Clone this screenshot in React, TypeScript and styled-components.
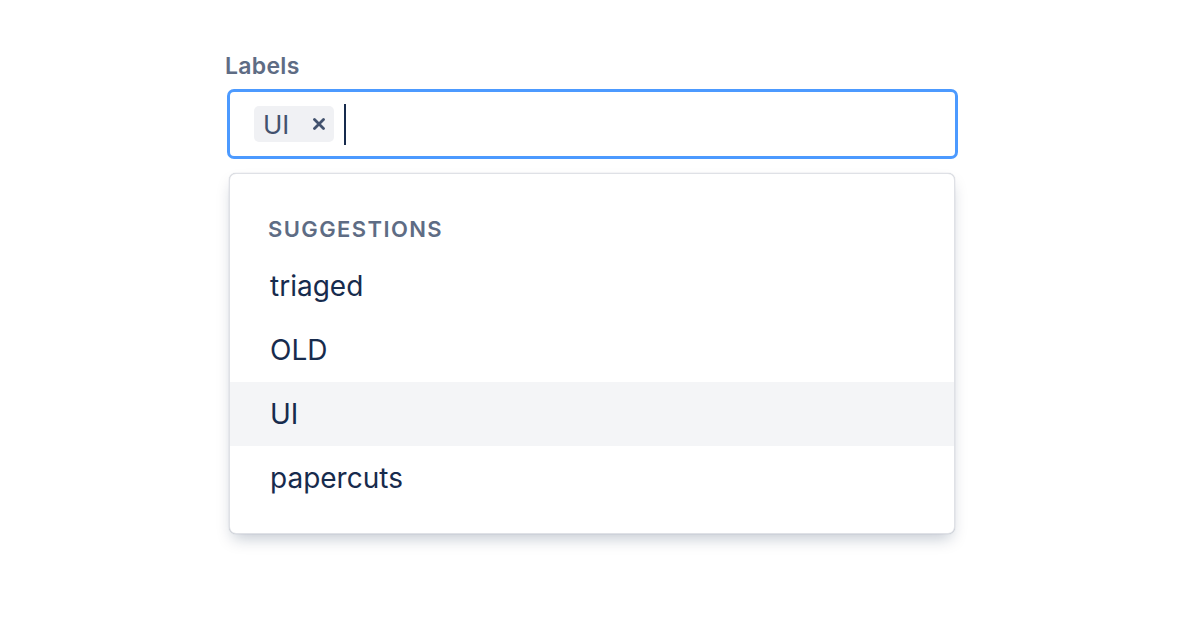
import React from 'react';
import styled, { createGlobalStyle } from 'styled-components';

const GlobalStyle = createGlobalStyle`
  html, body {
    margin: 0;
    padding: 0;
    background: #ffffff;
    font-family: Inter, "Noto Sans", "Liberation Sans", sans-serif;
    -webkit-font-smoothing: antialiased;
  }
`;

const Page = styled.div`
  width: 1200px;
  height: 644px;
  box-sizing: border-box;
  padding: 50px 0 0 227px;
`;

const Field = styled.div`
  width: 731px;
  display: flex;
  flex-direction: column;
`;

const Label = styled.label`
  font-size: 23px;
  font-weight: 600;
  letter-spacing: 0.3px;
  color: #5e6c84;
  line-height: 32px;
  margin: 0 0 7px -2px;
`;

const InputBox = styled.div`
  box-sizing: border-box;
  height: 70px;
  border: 3px solid #4c9aff;
  border-radius: 7px;
  display: flex;
  align-items: center;
  padding: 0 24px;
  gap: 10px;
`;

const Chip = styled.span`
  display: inline-flex;
  align-items: center;
  height: 36px;
  width: 80px;
  box-sizing: border-box;
  padding: 0 8px 0 9px;
  border-radius: 5px;
  background: #f0f1f4;
  color: #42526e;
  font-size: 26px;
  justify-content: space-between;
`;

const Remove = styled.span`
  display: inline-flex;
  align-items: center;
  justify-content: center;
  width: 14px;
  height: 14px;
  color: #42526e;
`;

const Caret = styled.span`
  width: 2px;
  height: 41px;
  background: #172b4d;
`;

const Menu = styled.div`
  box-sizing: border-box;
  margin: 14px 3px 0 2px;
  height: 361px;
  border: 1px solid #dfe1e6;
  border-radius: 7px;
  box-shadow: 0 8px 16px -4px rgba(9, 30, 66, 0.25), 0 0 1px rgba(9, 30, 66, 0.31);
  padding: 38px 0 24px;
  background: #ffffff;
`;

const Heading = styled.div`
  font-size: 22px;
  font-weight: 600;
  letter-spacing: 1.4px;
  color: #5e6c84;
  text-transform: uppercase;
  padding: 0 38px;
  line-height: 36px;
  margin-top: -1px;
  margin-bottom: 7px;
`;

const Option = styled.div<{ $active?: boolean }>`
  height: 64px;
  display: flex;
  align-items: center;
  padding: 0 40px;
  font-size: 28px;
  color: #172b4d;
  background: ${({ $active }) => ($active ? '#f4f5f7' : 'transparent')};
`;

const suggestions = ['triaged', 'OLD', 'UI', 'papercuts'];

export default function App() {
  return (
    <>
      <GlobalStyle />
      <Page>
        <Field>
          <Label>Labels</Label>
          <InputBox>
            <Chip>
              UI
              <Remove>
                <svg width="12" height="12" viewBox="0 0 12 12">
                  <path d="M1.5 1.5L10.5 10.5M10.5 1.5L1.5 10.5" stroke="currentColor" strokeWidth="2.8" strokeLinecap="round" />
                </svg>
              </Remove>
            </Chip>
            <Caret />
          </InputBox>
          <Menu>
            <Heading>Suggestions</Heading>
            {suggestions.map((s) => (
              <Option key={s} $active={s === 'UI'}>
                {s}
              </Option>
            ))}
          </Menu>
        </Field>
      </Page>
    </>
  );
}
